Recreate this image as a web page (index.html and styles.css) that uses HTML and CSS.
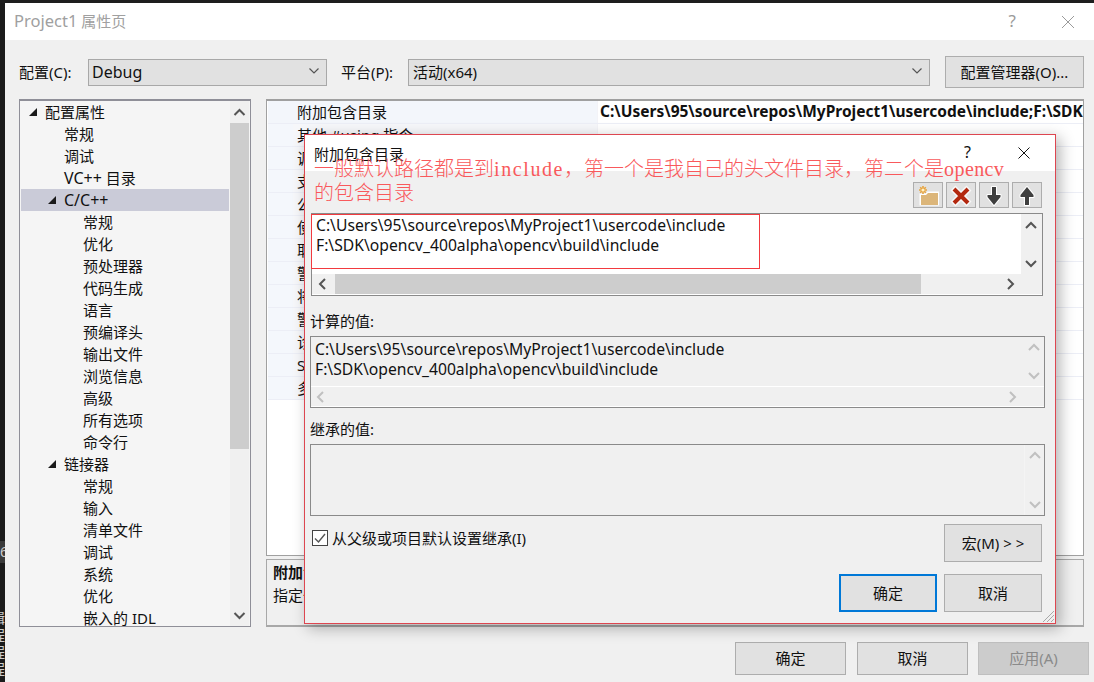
FILE: index.html
```html
<!DOCTYPE html>
<html lang="zh-CN">
<head>
<meta charset="utf-8">
<title>Project1 属性页</title>
<link rel="stylesheet" href="styles.css">
</head>
<body>
<div class="topstrip"></div>
<div class="sidestrip">
  <div class="strip-gap-a"></div>
  <div class="strip-block">6</div>
  <div class="strip-gap-b"></div>
  <div class="strip-glyphs">辑<br>程<br>程<br>程</div>
</div>
<div class="window">
  <header class="titlebar">
    <span class="title-text"><span class="title-latin">Project1</span> 属性页</span>
    <span class="title-help">?</span>
    <svg class="title-close" width="14" height="14" viewBox="0 0 14 14"><path d="M1 1L13 13M13 1L1 13" stroke="#9a9a9a" fill="none"/></svg>
  </header>

  <div class="configrow">
    <label class="cfg-label cfg-a">配置(C):</label>
    <div class="select sel-a"><span class="lat sel-latin">Debug</span><svg width="12" height="8" viewBox="0 0 12 8"><path d="M1.5 1.5L6 6L10.5 1.5" stroke="#555" fill="none" stroke-width="1.2"/></svg></div>
    <label class="cfg-label cfg-b">平台(P):</label>
    <div class="select sel-b"><span class="sel-text">活动(x64)</span><svg width="12" height="8" viewBox="0 0 12 8"><path d="M1.5 1.5L6 6L10.5 1.5" stroke="#555" fill="none" stroke-width="1.2"/></svg></div>
    <button class="btn btn-manager">配置管理器(O)...</button>
  </div>

  <div class="panels">
    <nav class="tree">
      <div class="tree-list">
        <div class="node l0"><i class="tri"></i>配置属性</div>
        <div class="node l1">常规</div>
        <div class="node l1">调试</div>
        <div class="node l1"><span class="lat">VC++</span> 目录</div>
        <div class="node l1b selected"><i class="tri"></i><span class="lat">C/C++</span></div>
        <div class="node l2">常规</div>
        <div class="node l2">优化</div>
        <div class="node l2">预处理器</div>
        <div class="node l2">代码生成</div>
        <div class="node l2">语言</div>
        <div class="node l2">预编译头</div>
        <div class="node l2">输出文件</div>
        <div class="node l2">浏览信息</div>
        <div class="node l2">高级</div>
        <div class="node l2">所有选项</div>
        <div class="node l2">命令行</div>
        <div class="node l1b"><i class="tri"></i>链接器</div>
        <div class="node l2">常规</div>
        <div class="node l2">输入</div>
        <div class="node l2">清单文件</div>
        <div class="node l2">调试</div>
        <div class="node l2">系统</div>
        <div class="node l2">优化</div>
        <div class="node l2">嵌入的 IDL</div>
      </div>
      <div class="vbar tree-bar">
        <svg class="chev" width="19" height="22" viewBox="0 0 19 22"><path d="M4.5 14L9.5 9L14.5 14" stroke="#555" stroke-width="2" fill="none"/></svg>
        <div class="tree-thumb"></div>
        <div class="grow"></div>
        <svg class="chev" width="19" height="22" viewBox="0 0 19 22"><path d="M4.5 9L9.5 14L14.5 9" stroke="#555" stroke-width="2" fill="none"/></svg>
      </div>
    </nav>

    <div class="rightcol">
      <section class="grid">
        <div class="prow first"><span class="pname">附加包含目录</span><span class="pval">C:\Users\95\source\repos\MyProject1\usercode\include;F:\SDK\opencv_400alpha\opencv\build\include</span></div>
        <div class="prow"><span class="pname">其他 #using 指令</span><span class="pval"></span></div>
        <div class="prow"><span class="pname">调试信息格式</span><span class="pval"></span></div>
        <div class="prow"><span class="pname">支持仅我的代码调试</span><span class="pval"></span></div>
        <div class="prow"><span class="pname">公共语言运行时支持</span><span class="pval"></span></div>
        <div class="prow"><span class="pname">使用 Windows 运行库</span><span class="pval"></span></div>
        <div class="prow"><span class="pname">取消显示启动版权标志</span><span class="pval"></span></div>
        <div class="prow"><span class="pname">警告等级</span><span class="pval"></span></div>
        <div class="prow"><span class="pname">将警告视为错误</span><span class="pval"></span></div>
        <div class="prow"><span class="pname">警告版本</span><span class="pval"></span></div>
        <div class="prow"><span class="pname">诊断格式</span><span class="pval"></span></div>
        <div class="prow"><span class="pname">SDL 检查</span><span class="pval"></span></div>
        <div class="prow"><span class="pname">多处理器编译</span><span class="pval"></span></div>
      </section>
      <section class="desc">
        <strong>附加包含目录</strong>
        <span>指定一个或多个要添加到包含路径中的目录</span>
      </section>
    </div>
  </div>

  <footer class="footer">
    <button class="btn btn-foot">确定</button>
    <button class="btn btn-foot">取消</button>
    <button class="btn btn-foot btn-disabled">应用(A)</button>
  </footer>

  <div class="dialog">
    <div class="d-title">
      <span class="d-title-text">附加包含目录</span>
      <span class="d-help">?</span>
      <svg class="d-close" width="14" height="14" viewBox="0 0 14 14"><path d="M1.5 1.5L12.5 12.5M12.5 1.5L1.5 12.5" stroke="#111" fill="none"/></svg>
    </div>
    <div class="d-tools">
      <button class="tool"><svg width="24" height="22" viewBox="0 0 24 22">
        <path d="M3.5 8.5V20.5H23V6.5H11.5L9.5 8.5Z" fill="#fff"/>
        <path d="M5 10H10L12 8H22V20H5Z" fill="#dcb67a"/>
        <g stroke="#e8a33c" stroke-width="1.6"><path d="M7 1V9M3 5H11M4.2 2.2L9.8 7.8M9.8 2.2L4.2 7.8"/></g>
        <circle cx="7" cy="5" r="1.6" fill="#fff3c8"/>
      </svg></button>
      <button class="tool"><svg width="24" height="22" viewBox="0 0 24 22">
        <path d="M4 3L20 19M20 3L4 19" stroke="#fff" stroke-width="7" opacity=".75" fill="none"/>
        <path d="M5 4L19 18M19 4L5 18" stroke="#b3280f" stroke-width="4" fill="none"/>
      </svg></button>
      <button class="tool"><svg width="24" height="22" viewBox="0 0 24 22">
        <path d="M10 2H14V10H18.5V12L12 20L5.5 12V10H10Z" fill="#3f3f3f" stroke="#fff" stroke-width="2" paint-order="stroke" stroke-linejoin="round"/>
      </svg></button>
      <button class="tool"><svg width="24" height="22" viewBox="0 0 24 22">
        <path d="M10 20H14V12H18.5V10L12 2L5.5 10V12H10Z" fill="#3f3f3f" stroke="#fff" stroke-width="2" paint-order="stroke" stroke-linejoin="round"/>
      </svg></button>
    </div>

    <div class="editbox">
      <div class="box-main">
        <div class="box-text edit-text">C:\Users\95\source\repos\MyProject1\usercode\include<br>F:\SDK\opencv_400alpha\opencv\build\include</div>
        <div class="vbar box-bar">
          <svg width="20" height="22" viewBox="0 0 20 22"><path d="M5 14L10 9L15 14" stroke="#555" stroke-width="2" fill="none"/></svg>
          <div class="grow"></div>
          <svg width="20" height="22" viewBox="0 0 20 22"><path d="M5 9L10 14L15 9" stroke="#555" stroke-width="2" fill="none"/></svg>
        </div>
      </div>
      <div class="hbar">
        <svg class="harrow" width="23" height="19" viewBox="0 0 23 19"><path d="M13 5L8 10L13 15" stroke="#555" stroke-width="2" fill="none"/></svg>
        <div class="h-thumb"></div>
        <div class="grow"></div>
        <svg class="harrow" width="23" height="19" viewBox="0 0 23 19"><path d="M10 5L15 10L10 15" stroke="#555" stroke-width="2" fill="none"/></svg>
        <div class="hcorner"></div>
      </div>
    </div>

    <div class="d-label d-label-a">计算的值:</div>
    <div class="valbox">
      <div class="box-main">
        <div class="box-text val-text">C:\Users\95\source\repos\MyProject1\usercode\include<br>F:\SDK\opencv_400alpha\opencv\build\include</div>
        <div class="vbar box-bar dim">
          <svg width="20" height="20" viewBox="0 0 20 20"><path d="M5 13L10 8L15 13" stroke="#555" stroke-width="2" fill="none"/></svg>
          <div class="grow"></div>
          <svg width="20" height="20" viewBox="0 0 20 20"><path d="M5 7L10 12L15 7" stroke="#555" stroke-width="2" fill="none"/></svg>
        </div>
      </div>
      <div class="hbar hbar-dim">
        <svg class="harrow dim" width="23" height="19" viewBox="0 0 23 19"><path d="M12 5L7 10L12 15" stroke="#555" stroke-width="2" fill="none"/></svg>
        <div class="grow"></div>
        <svg class="harrow dim" width="23" height="19" viewBox="0 0 23 19"><path d="M10 5L15 10L10 15" stroke="#555" stroke-width="2" fill="none"/></svg>
        <div class="hcorner"></div>
      </div>
    </div>

    <div class="d-label d-label-b">继承的值:</div>
    <div class="valbox inherit">
      <div class="grow"></div>
      <div class="vbar box-bar dim inherit-bar">
        <svg width="20" height="20" viewBox="0 0 20 20"><path d="M5 13L10 8L15 13" stroke="#555" stroke-width="2" fill="none"/></svg>
        <div class="grow"></div>
        <svg width="20" height="20" viewBox="0 0 20 20"><path d="M5 7L10 12L15 7" stroke="#555" stroke-width="2" fill="none"/></svg>
      </div>
    </div>

    <div class="d-options">
      <div class="check-wrap">
        <span class="checkbox"><svg width="14" height="14" viewBox="0 0 14 14"><path d="M2 7.5L5.5 11L12 3" stroke="#555" stroke-width="1.4" fill="none"/></svg></span>
        <span class="check-label">从父级或项目默认设置继承(I)</span>
      </div>
      <button class="btn btn-dlg">宏(M) &gt; &gt;</button>
    </div>
    <div class="d-actions">
      <button class="btn btn-dlg btn-default">确定</button>
      <button class="btn btn-dlg">取消</button>
    </div>

    <div class="note">一般默认路径都是到<span class="note-latin">include</span>，第一个是我自己的头文件目录，第二个是<span class="note-latin note-tight">opencv</span><br>的包含目录</div>
    <div class="highlight"></div>
    <svg class="grip" width="13" height="13" viewBox="0 0 13 13"><path d="M1 12L12 1M5 12L12 5M9 12L12 9" stroke="#a8a8a8" fill="none"/></svg>
  </div>
</div>
</body>
</html>
```

FILE: styles.css
```css
* { box-sizing: border-box; }
html, body { margin: 0; padding: 0; }
body {
  width: 1094px;
  height: 682px;
  overflow: hidden;
  background: #1b1b1b;
  display: grid;
  grid-template-columns: 5px 1089px;
  grid-template-rows: 3px 679px;
  font-family: "Noto Sans", "Noto Sans CJK SC", sans-serif;
  font-size: 15px;
  color: #111;
}
.topstrip { grid-column: 1 / 3; background: #1e1e1e; }
.sidestrip { background: #1b1b1b; overflow: hidden; color: #ccc; font-size: 14px; line-height: 21px; }
.strip-gap-a { height: 538px; }
.strip-block { height: 22px; background: #3a3a3a; white-space: nowrap; }
.strip-gap-b { height: 46px; }
.strip-glyphs { margin-left: -9px; line-height: 17px; }

.lat { font-size: 16px; }
.sel-latin { padding: 2px 0 0 1px; }

.window { position: relative; background: #f0f0f0; overflow: hidden; }
.titlebar { height: 37px; background: #fff; display: flex; align-items: center; padding: 0 0 2px 9px; }
.title-text { font-size: 15px; color: #a0a0a0; flex: 1; }
.title-latin { font-size: 16.5px; }
.title-help { font-size: 17px; color: #9a9a9a; margin-right: 45px; }
.title-close { margin-right: 19px; margin-top: 2px; }

.grow { flex: 1; }

.configrow { display: flex; align-items: center; height: 32px; margin-top: 16px; padding-left: 14px; }
.cfg-label { white-space: nowrap; padding-bottom: 2px; }
.cfg-a { width: 69px; }
.cfg-b { width: 67px; margin-left: 14px; }
.select {
  height: 27px;
  background: #e1e1e1;
  border: 1px solid #a8a8a8;
  display: flex;
  align-items: center;
  justify-content: space-between;
  padding: 0 6px 2px 2px;
}
.sel-text { padding-left: 2px; }
.sel-a { width: 239px; }
.sel-b { width: 522px; }
.btn {
  font: inherit;
  color: #111;
  background: #e1e1e1;
  border: 1px solid #adadad;
  padding: 0 0 2px;
  border-radius: 0;
}
.btn-manager { width: 139px; height: 32px; margin-left: 15px; white-space: nowrap; }

.panels { display: flex; height: 528px; margin-top: 11px; padding-left: 14px; gap: 15px; }
.tree {
  width: 232px;
  background: #f5f5f5;
  border: 1px solid #8f8f98;
  border-top-width: 2px;
  display: flex;
  overflow: hidden;
}
.tree-list { width: 208px; margin-left: 1px; flex: none; }
.node { height: 22px; line-height: 22px; white-space: nowrap; position: relative; }
.l0 { padding-left: 24px; }
.l1 { padding-left: 43px; }
.l1b { padding-left: 43px; }
.l2 { padding-left: 62px; }
.selected { background: #cacbd8; }
.tri {
  display: block;
  position: absolute;
  top: 7px;
  width: 0;
  height: 0;
  border-style: solid;
  border-width: 0 0 8px 8px;
  border-color: transparent transparent #1a1a1a transparent;
}
.l0 .tri { left: 8px; }
.l1b .tri { left: 27px; }
.vbar { display: flex; flex-direction: column; width: 20px; flex: none; }
.tree-bar { margin-left: 1px; background: #f0f0f0; width: 19px; }
.tree-thumb { height: 326px; background: #cdcdcd; }
.chev { display: block; flex: none; }

.rightcol { width: 818px; display: flex; flex-direction: column; gap: 3px; }
.grid { height: 457px; background: #fff; border: 1px solid #a0a0a0; border-top-width: 2px; overflow: hidden; padding-left: 1px; }
.prow { display: flex; height: 23px; line-height: 22px; border-bottom: 1px solid #eceef6; background: linear-gradient(90deg, #f4f7fc 25px, #f6f7fa 25px); }
.first { background: #f3f6fb; }
.pname { width: 329px; flex: none; padding-left: 29px; white-space: nowrap; overflow: hidden; }
.pval { flex: 1; background: #fff; padding-left: 2px; font-size: 15.5px; line-height: 20px; font-weight: 700; white-space: nowrap; overflow: hidden; border-left: 1px solid #f3f3f7; }
.desc { height: 68px; border: 1px solid #a8a8a8; border-bottom-width: 2px; padding: 0 6px; display: flex; flex-direction: column; }
.desc strong { line-height: 23px; margin-top: 1px; }
.desc span { line-height: 23px; }

.footer { display: flex; justify-content: flex-end; gap: 11px; margin-top: 15px; padding-right: 5px; }
.btn-foot { width: 111px; height: 33px; }
.btn-disabled { background: #cccccc; color: #8a8a8a; border-color: #bfbfbf; margin-left: -1px; }

.dialog {
  position: absolute;
  left: 299px;
  top: 131px;
  width: 752px;
  height: 490px;
  background: #f0f0f0;
  border: 1px solid #dd4650;
  box-shadow: 4px 4px 14px rgba(0, 0, 0, .3);
}
.d-title { height: 36px; background: #fff; display: flex; align-items: center; padding-left: 9px; }
.d-title-text { flex: 1; }
.d-help { font-size: 16px; margin-right: 46px; padding-bottom: 2px; }
.d-close { margin-right: 24px; }
.d-tools { display: flex; justify-content: flex-end; gap: 3px; margin-top: 11px; padding-right: 13px; }
.tool { width: 30px; height: 26px; padding: 1px 0 0; border: 1px solid #adadad; background: #e1e1e1; display: flex; align-items: center; justify-content: center; }
.editbox { height: 83px; margin: 5px 12px 0 6px; background: #fff; border: 1px solid #8a8a8a; display: flex; flex-direction: column; }
.box-main { flex: 1; display: flex; min-height: 0; }
.box-text { flex: 1; font-size: 15.7px; line-height: 20px; white-space: nowrap; overflow: hidden; }
.edit-text { padding: 1px 0 0 4px; }
.val-text { padding: 2px 0 0 4px; }
.box-bar { background: #f0f0f0; }
.editbox .box-bar { justify-content: space-between; width: 21px; }
.hbar { height: 20px; flex: none; display: flex; background: #f0f0f0; margin-bottom: 1px; }
.harrow { display: block; flex: none; }
.hcorner { width: 21px; flex: none; }
.h-thumb { width: 586px; background: #cdcdcd; }
.d-label { margin-left: 5px; line-height: 20px; }
.d-label-a { margin-top: 15px; }
.d-label-b { margin-top: 11px; }
.valbox { height: 72px; margin: 5px 10px 0 5px; border: 1px solid #8a8a8a; display: flex; flex-direction: column; background: #f0f0f0; }
.hbar-dim { background: #f0f0f0; border-top: 1px solid #fff; border-bottom: 1px solid #fff; height: 21px; margin: 0; }
.dim { opacity: .3; }
.inherit { flex-direction: row; }
.inherit-bar { border-left: 1px solid #fff; margin-right: 0; }
.d-options { display: flex; align-items: center; justify-content: space-between; height: 38px; margin: 8px 13px 0 7px; }
.check-wrap { display: flex; align-items: center; gap: 4px; margin-top: -11px; }
.checkbox { width: 16px; height: 16px; border: 1px solid #444; background: #fff; display: flex; align-items: center; justify-content: center; }
.check-label { font-size: 15px; white-space: nowrap; }
.btn-dlg { width: 98px; height: 38px; }
.d-actions { display: flex; justify-content: flex-end; gap: 7px; margin: 12px 13px 0 0; }
.btn-default { border: 2px solid #0078d7; }

.note {
  position: absolute;
  left: 9px;
  top: 22px;
  font-size: 20px;
  line-height: 24px;
  font-weight: 300;
  color: #f9595c;
  white-space: nowrap;
}
.note-latin { font-family: "Liberation Serif", serif; font-size: 20px; letter-spacing: 1.6px; line-height: 1; }
.note-tight { letter-spacing: .4px; }
.highlight { position: absolute; left: 6px; top: 79px; width: 449px; height: 55px; border: 1px solid #f23a3f; }
.grip { position: absolute; right: 0; bottom: 0; }
```
